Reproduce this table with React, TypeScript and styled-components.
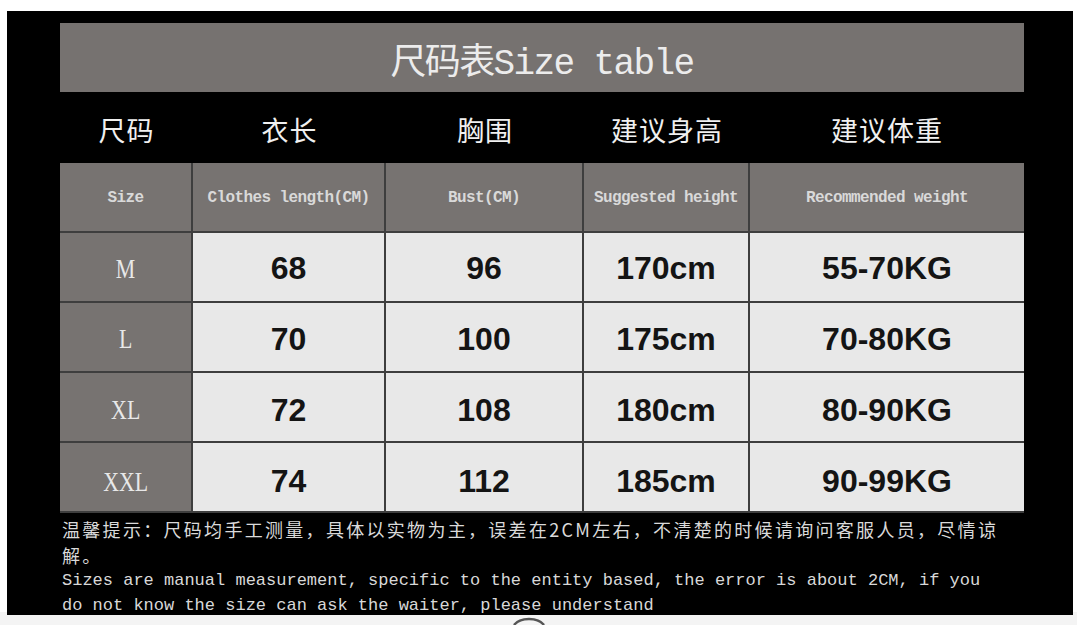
import styled, { createGlobalStyle } from "styled-components";

const COLUMNS = "133px 193px 198px 166px 274px";

const headings = ["尺码", "衣长", "胸围", "建议身高", "建议体重"];
const labels = [
  "Size",
  "Clothes length(CM)",
  "Bust(CM)",
  "Suggested height",
  "Recommended weight",
];

const rows = [
  { size: "M", values: ["68", "96", "170cm", "55-70KG"], drop: 3 },
  { size: "L", values: ["70", "100", "175cm", "70-80KG"], drop: 4 },
  { size: "XL", values: ["72", "108", "180cm", "80-90KG"], drop: 6 },
  { size: "XXL", values: ["74", "112", "185cm", "90-99KG"], drop: 9 },
];

function App() {
  return (
    <>
      <GlobalStyle />
      <Page>
        <Panel>
          <TitleBar>尺码表Size table</TitleBar>

          <HeadRow>
            {headings.map((h) => (
              <HeadCell key={h}>{h}</HeadCell>
            ))}
          </HeadRow>

          <Table>
            {labels.map((l) => (
              <Cell key={l} $kind="label">
                {l}
              </Cell>
            ))}
            {rows.map((row) => (
              <Row key={row.size}>
                <Cell $kind="size" $drop={row.drop}>
                  <SizeName>{row.size}</SizeName>
                </Cell>
                {row.values.map((v) => (
                  <Cell key={v} $kind="value" $drop={row.drop}>
                    {v}
                  </Cell>
                ))}
              </Row>
            ))}
          </Table>

          <Footer>
            <NoteCn>
              <span>
                温馨提示：尺码均手工测量，具体以实物为主，误差在2CM左右，不清楚的时候请询问客服人员，尽情谅
              </span>
              <span>解。</span>
            </NoteCn>
            <NoteEn>
              <span>
                Sizes are manual measurement, specific to the entity based, the
                error is about 2CM, if you
              </span>
              <span>
                do not know the size can ask the waiter, please understand
              </span>
            </NoteEn>
          </Footer>
        </Panel>

        <Hook width="34" height="10" viewBox="0 0 34 10">
          <path
            d="M2 10 C 8 2, 26 2, 32 10"
            fill="none"
            stroke="#555"
            strokeWidth="2.5"
          />
        </Hook>
      </Page>
    </>
  );
}

const GlobalStyle = createGlobalStyle`
  html, body {
    margin: 0;
    background: #ffffff;
  }
  * {
    box-sizing: border-box;
  }
`;

const Page = styled.div`
  width: 1077px;
  height: 625px;
  padding: 11px 0 0 7px;
  overflow: hidden;
  background: linear-gradient(#ffffff 0, #ffffff 612px, #f4f4f4 612px);
`;

const Panel = styled.div`
  width: 1066px;
  height: 604px;
  background: #000;
  padding: 12px 0 0 53px;
  display: flex;
  flex-direction: column;
`;

const TitleBar = styled.div`
  flex: none;
  width: 964px;
  height: 69px;
  background: #767270;
  display: flex;
  align-items: center;
  justify-content: center;
  padding-top: 2px;
  color: #ececec;
  font-family: "Liberation Mono", "Noto Sans CJK SC", monospace;
  font-size: 36px;
  letter-spacing: -1.6px;
  white-space: nowrap;
`;

const HeadRow = styled.div`
  flex: none;
  display: grid;
  grid-template-columns: ${COLUMNS};
  height: 71px;
  align-items: center;
  padding-top: 3px;
`;

const HeadCell = styled.div`
  text-align: center;
  color: #f0f0f0;
  font-family: "Noto Sans CJK SC", sans-serif;
  font-size: 27px;
  letter-spacing: 1px;
`;

const Table = styled.div`
  flex: none;
  display: grid;
  grid-template-columns: ${COLUMNS};
  width: 964px;
`;

const Row = styled.div`
  display: contents;
`;

const Cell = styled.div<{ $kind: "label" | "size" | "value"; $drop?: number }>`
  height: 70px;
  display: flex;
  align-items: center;
  justify-content: center;
  padding-top: ${({ $drop }) => $drop ?? 2}px;
  border-bottom: 2px solid #3e3e3e;
  border-right: 2px solid #3e3e3e;
  white-space: nowrap;
  overflow: hidden;

  &:nth-child(5n) {
    border-right: none;
  }

  ${({ $kind }) =>
    $kind === "label" &&
    `
      background: #777371;
      color: #d9d9d9;
      font-family: "Liberation Mono", monospace;
      font-weight: 700;
      font-size: 16px;
      letter-spacing: -0.6px;
    `}

  ${({ $kind }) =>
    $kind === "size" &&
    `
      background: #777371;
      color: #e8e8e8;
      font-family: "Liberation Serif", serif;
      font-size: 28px;
    `}

  ${({ $kind }) =>
    $kind === "value" &&
    `
      background: #e8e8e8;
      color: #141414;
      font-family: "Liberation Sans", Arial, sans-serif;
      font-weight: 700;
      font-size: 32px;
    `}
`;

const SizeName = styled.span`
  display: inline-block;
  transform: scaleX(0.78);
`;

const Footer = styled.div`
  flex: none;
  padding: 3px 0 0 2px;
  display: flex;
  flex-direction: column;
`;

const NoteCn = styled.div`
  display: flex;
  flex-direction: column;
  color: #dadada;
  font-family: "Noto Sans CJK SC", sans-serif;
  font-size: 18px;
  line-height: 26px;
  letter-spacing: 2.3px;
  white-space: nowrap;
`;

const NoteEn = styled.div`
  display: flex;
  flex-direction: column;
  color: #d8d8d8;
  font-family: "Liberation Mono", monospace;
  font-size: 17px;
  line-height: 25px;
  white-space: nowrap;
`;

const Hook = styled.svg`
  display: block;
  margin: 0 0 0 505px;
`;

export default App;
